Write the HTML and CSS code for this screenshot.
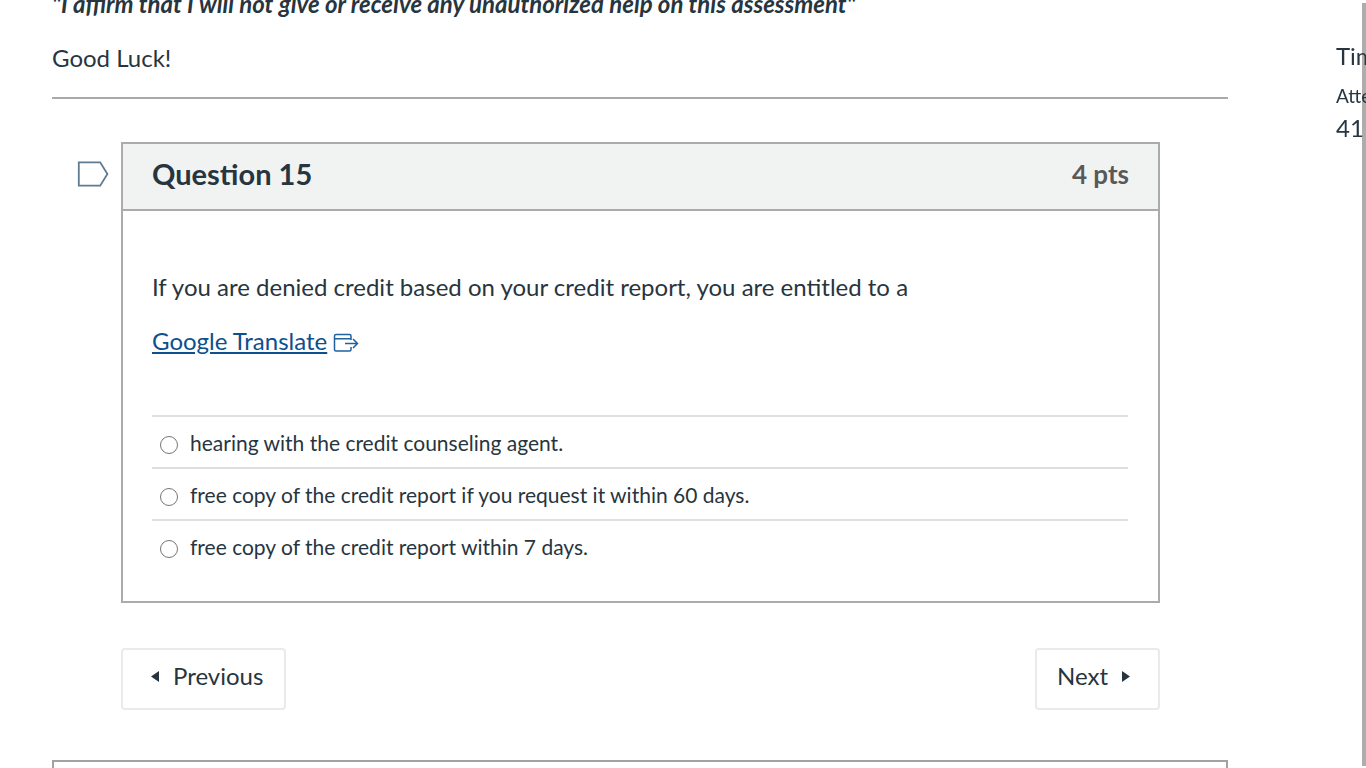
FILE: index.html
```html
<!DOCTYPE html>
<html lang="en">
<head>
<meta charset="utf-8">
<meta name="viewport" content="width=device-width, initial-scale=1">
<title>Quiz</title>
<link rel="stylesheet" href="styles.css">
</head>
<body>
<div class="page">
  <main class="quiz">
    <section class="instructions">
      <p><strong><em>"I affirm that I will not give or receive any unauthorized help on this assessment"</em></strong></p>
      <p>Good Luck!</p>
    </section>
    <form class="questions">
      <div class="question-row">
        <button type="button" class="flag" aria-label="Flag question">
          <svg width="32" height="26" viewBox="0 0 32 26" fill="none" stroke="#5f7b8f" stroke-width="1.8"><path d="M1.8 1.3H23.2L30.4 13L23.2 24.7H1.8Z"/></svg>
        </button>
        <article class="question">
          <header class="question-header">
            <h2 class="question-title">Question 15</h2>
            <span class="points">4 pts</span>
          </header>
          <div class="question-body">
            <p>If you are denied credit based on your credit report, you are entitled to a</p>
            <p class="link-line"><a href="#translate" class="translate">Google Translate</a>
              <svg class="external" width="26" height="20" viewBox="0 0 26 20" fill="none" stroke="#1f629f" stroke-width="1.5"><path d="M18 7V3Q18 1.5 16.500 1.500H3Q1.500 1.500 1.500 3V16.500Q1.500 18 3 18H16.500Q18 18 18 16.500V14M1.500 5.800H18M12 10.500H24.500M20 6L24.500 10.500L20 15"/></svg>
            </p>
            <div class="answers" role="radiogroup" aria-label="Answers">
              <label class="answer"><input type="radio" name="answer"><span>hearing with the credit counseling agent.</span></label>
              <label class="answer"><input type="radio" name="answer"><span>free copy of the credit report if you request it within 60 days.</span></label>
              <label class="answer"><input type="radio" name="answer"><span>free copy of the credit report within 7 days.</span></label>
            </div>
          </div>
        </article>
      </div>
      <div class="nav-row">
        <button type="button" class="nav-button previous"><svg width="8" height="11" viewBox="0 0 8 11"><path d="M8 0V11L0 5.500Z" fill="currentColor"/></svg>Previous</button>
        <button type="button" class="nav-button next">Next<svg width="8" height="11" viewBox="0 0 8 11"><path d="M0 0V11L8 5.500Z" fill="currentColor"/></svg></button>
      </div>
      <div class="submit-bar"></div>
    </form>
  </main>
  <aside class="timer">
    <div class="timer-title">Time Running:</div>
    <div class="timer-due">Attempt due:</div>
    <div class="timer-value">41 Minutes</div>
  </aside>
</div>
<div class="scroll-thumb"></div>
</body>
</html>
```
FILE: styles.css
```css
* {
  box-sizing: border-box;
}

body {
  margin: 0;
  height: 100vh;
  overflow: hidden;
  background: #fff;
  color: #273540;
  font-family: Lato, "Liberation Sans", sans-serif;
  font-size: 24px;
  line-height: 36px;
}

p,
h2 {
  margin: 0;
}

button {
  font: inherit;
  color: inherit;
  cursor: pointer;
}

svg {
  flex: none;
}

.page {
  display: grid;
  grid-template-columns: minmax(0, 1fr) 30px;
  column-gap: 108px;
  padding-left: 52px;
}

.instructions {
  display: flex;
  flex-direction: column;
  gap: 18px;
  margin-top: -14px;
  padding-bottom: 21px;
  border-bottom: 2px solid #a9a9a9;
}

.questions {
  padding-top: 43px;
}

.question-row {
  display: flex;
  align-items: flex-start;
  gap: 12px;
  padding: 0 68px 0 25px;
}

.flag {
  display: flex;
  margin-top: 19px;
  padding: 0;
  border: 0;
  background: none;
}

.question {
  flex: 1;
  min-width: 0;
  border: 2px solid #ababab;
}

.question-header {
  display: flex;
  align-items: center;
  justify-content: space-between;
  padding: 12px 29px 17px;
  border-bottom: 2px solid #ababab;
  background: #f1f3f3;
}

.question-title {
  font-size: 29px;
  font-weight: 700;
}

.points {
  color: #595959;
  font-size: 26px;
  font-weight: 700;
  line-height: 34px;
}

.question-body {
  padding: 58px 30px 30px 29px;
}

.link-line {
  display: flex;
  align-items: center;
  gap: 6px;
  margin-top: 18px;
}

.translate {
  color: #0e4f8e;
  text-decoration: underline;
}

.external {
  margin-top: 4px;
}

.answers {
  margin-top: 56px;
}

.answer {
  display: flex;
  align-items: center;
  gap: 12px;
  padding: 8px 0 6px 8px;
  border-top: 2px solid #dedfe0;
  font-size: 21px;
}

.answer input {
  width: 18px;
  height: 18px;
  margin: 3px 0 0;
}

.nav-row {
  display: flex;
  justify-content: space-between;
  padding: 45px 68px 50px 69px;
}

.nav-button {
  display: flex;
  align-items: center;
  gap: 14px;
  padding: 8px 21px 14px;
  border: 2px solid #e8eaec;
  border-radius: 4px;
  background: #fff;
}

.previous {
  padding-left: 28px;
}

.next {
  padding-left: 20px;
  padding-right: 28px;
}

.submit-bar {
  height: 80px;
  border: 2px solid #a3a3a3;
}

.timer {
  z-index: 1;
  padding-top: 38px;
  overflow: hidden;
  white-space: nowrap;
}

.timer-due {
  margin-top: 7px;
  font-size: 19px;
  line-height: 29px;
}

.scroll-thumb {
  position: fixed;
  top: 3px;
  right: 0;
  bottom: 2px;
  width: 4px;
  background: #adadad;
}
```
